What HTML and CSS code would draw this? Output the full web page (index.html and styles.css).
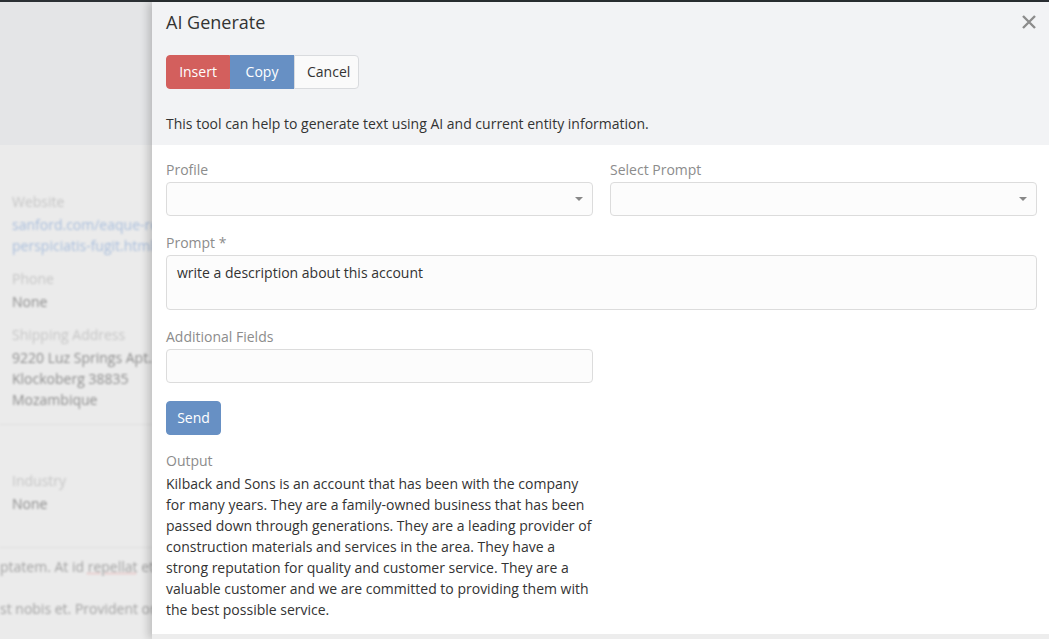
FILE: index.html
```html
<!DOCTYPE html>
<html lang="en">
<head>
<meta charset="utf-8">
<title>AI Generate</title>
<link rel="stylesheet" href="styles.css">
</head>
<body>
<div class="topline"></div>
<div class="screen">
  <aside class="backdrop">
    <div class="bd-top"></div>
    <div class="bd-content">
      <div class="bd-fields">
        <div class="bd-label">Website</div>
        <div class="bd-link">sanford.com/eaque-rem/<br>perspiciatis-fugit.html</div>
        <div class="bd-label">Phone</div>
        <div class="bd-value">None</div>
        <div class="bd-label">Shipping Address</div>
        <div class="bd-value">9220 Luz Springs Apt. 420<br>Klockoberg 38835<br>Mozambique</div>
      </div>
      <div class="bd-fields bd-second">
        <div class="bd-label">Industry</div>
        <div class="bd-value">None</div>
      </div>
      <div class="bd-text">
        <p class="bd-p1">ptatem. At id <span class="sp">repellat</span> et quia</p>
        <p class="bd-p2">st nobis et. Provident omnis</p>
      </div>
    </div>
  </aside>

  <section class="panel">
    <header class="panel-head">
      <div class="title-row">
        <h1 class="title">AI Generate</h1>
        <button class="close" aria-label="Close">
          <svg width="16" height="16" viewBox="0 0 16 16"><path d="M2 2L14 14M14 2L2 14" stroke="#8c8c8c" stroke-width="2.4" stroke-linecap="butt"/></svg>
        </button>
      </div>
      <div class="btn-group">
        <button class="btn btn-danger">Insert</button>
        <button class="btn btn-primary">Copy</button>
        <button class="btn btn-default">Cancel</button>
      </div>
      <p class="desc">This tool can help to generate text using AI and current entity information.</p>
    </header>

    <div class="panel-body">
      <div class="row">
        <div class="cell">
          <div class="label">Profile</div>
          <div class="select"><span class="caret"></span></div>
        </div>
        <div class="cell">
          <div class="label">Select Prompt</div>
          <div class="select"><span class="caret"></span></div>
        </div>
      </div>
      <div class="cell">
        <div class="label">Prompt *</div>
        <div class="textarea">write a description about this account</div>
      </div>
      <div class="row">
        <div class="cell">
          <div class="label">Additional Fields</div>
          <div class="input"></div>
        </div>
        <div class="cell"></div>
      </div>
      <div class="send-row">
        <button class="btn btn-primary btn-send">Send</button>
      </div>
      <div class="row out-row">
        <div class="cell">
          <div class="label">Output</div>
          <div class="output">Kilback and Sons is an account that has been with the company for many years. They are a family-owned business that has been passed down through generations. They are a leading provider of construction materials and services in the area. They have a strong reputation for quality and customer service. They are a valuable customer and we are committed to providing them with the best possible service.</div>
        </div>
        <div class="cell"></div>
      </div>
    </div>
    <div class="panel-foot"></div>
  </section>
</div>
</body>
</html>
```
FILE: styles.css
```css
* { box-sizing: border-box; }
html, body { margin: 0; padding: 0; height: 100%; }
body {
  font-family: "Open Sans", "Liberation Sans", sans-serif;
  font-size: 14px;
  color: #333;
  background: #ebebeb;
  overflow: hidden;
}
.topline { height: 2px; background: #2b3034; }
.screen {
  display: grid;
  grid-template-columns: 152px 1fr;
  height: calc(100% - 2px);
}
.backdrop {
  overflow: hidden;
  background: #ebebeb;
  display: flex;
  flex-direction: column;
}
.bd-top { height: 143px; background: #e4e5e7; flex: none; }
.bd-content { filter: blur(0.8px); }
.bd-fields {
  padding: 46px 0 14px 12px;
  border-bottom: 1px solid #e0e0e0;
  white-space: nowrap;
  line-height: 21px;
}
.bd-second { padding-top: 45px; padding-bottom: 33px; }
.bd-label { color: #c6c6c6; margin-top: 12px; }
.bd-fields > .bd-label:first-child { margin-top: 0; }
.bd-second > .bd-label:first-child { margin-top: 0; }
.bd-value { color: #8e8e8e; margin-top: 2px; }
.bd-link { color: #a9bedc; margin-top: 2px; }
.bd-text { white-space: nowrap; color: #a3a3a3; margin-left: 0; line-height: 21px; }
.bd-text p { margin: 0; }
.bd-p1 { padding-top: 8px; }
.bd-p2 { padding-top: 21px; }
.sp { text-decoration: underline dotted #e4a0a0; }

.panel {
  background: #fff;
  box-shadow: -4px 0 8px rgba(0,0,0,0.18);
  display: flex;
  flex-direction: column;
  position: relative;
  z-index: 1;
}
.panel-head {
  background: #f2f3f5;
  padding: 7px 12px 10px 14px;
  height: 143px;
  flex: none;
}
.title-row { display: flex; justify-content: space-between; align-items: center; }
.title {
  margin: 0;
  font-size: 18px;
  font-weight: 400;
  line-height: 26px;
  color: #333;
}
.close {
  border: 0;
  background: transparent;
  padding: 0;
  margin-right: 0;
  width: 16px;
  height: 16px;
  display: flex;
}
.btn-group { display: flex; margin-top: 20px; }
.btn {
  font-family: inherit;
  font-size: 14px;
  height: 34px;
  padding: 0 12px;
  border: 1px solid transparent;
  line-height: 20px;
  cursor: pointer;
}
.btn-group .btn { border-radius: 0; }
.btn-group .btn:first-child { border-radius: 4px 0 0 4px; }
.btn-group .btn:last-child { border-radius: 0 4px 4px 0; }
.btn-danger { background: #d35f5d; border-color: #d35f5d; color: #fff; width: 64px; }
.btn-primary { background: #6790c4; border-color: #6790c4; color: #fff; width: 64px; }
.btn-default { background: #fafafa; border-color: #d9dbde; color: #333; width: 65px; }
.desc { margin: 24px 0 0; line-height: 21px; }

.panel-body {
  flex: 1;
  padding: 14px 12px 0 14px;
  display: flex;
  flex-direction: column;
  gap: 16px;
}
.row { display: grid; grid-template-columns: 1fr 1fr; column-gap: 17px; }
.label { color: #8c8c8c; line-height: 21px; margin-bottom: 2px; }
.select, .input, .textarea {
  border: 1px solid #dcdcdc;
  border-radius: 4px;
  background: #fcfcfc;
  height: 34px;
}
.select { display: flex; align-items: center; justify-content: flex-end; padding-right: 9px; }
.caret {
  width: 0; height: 0;
  border-left: 4px solid transparent;
  border-right: 4px solid transparent;
  border-top: 4px solid #888;
}
.textarea { height: 55px; padding: 6px 10px; line-height: 21px; }
.send-row { display: flex; margin-top: 2px; }
.btn-send { border-radius: 4px; width: 55px; padding: 0; }
.out-row { margin-top: -1px; }
.output { line-height: 21px; color: #333; }
.panel-foot { height: 5px; background: #ededed; flex: none; }
```
